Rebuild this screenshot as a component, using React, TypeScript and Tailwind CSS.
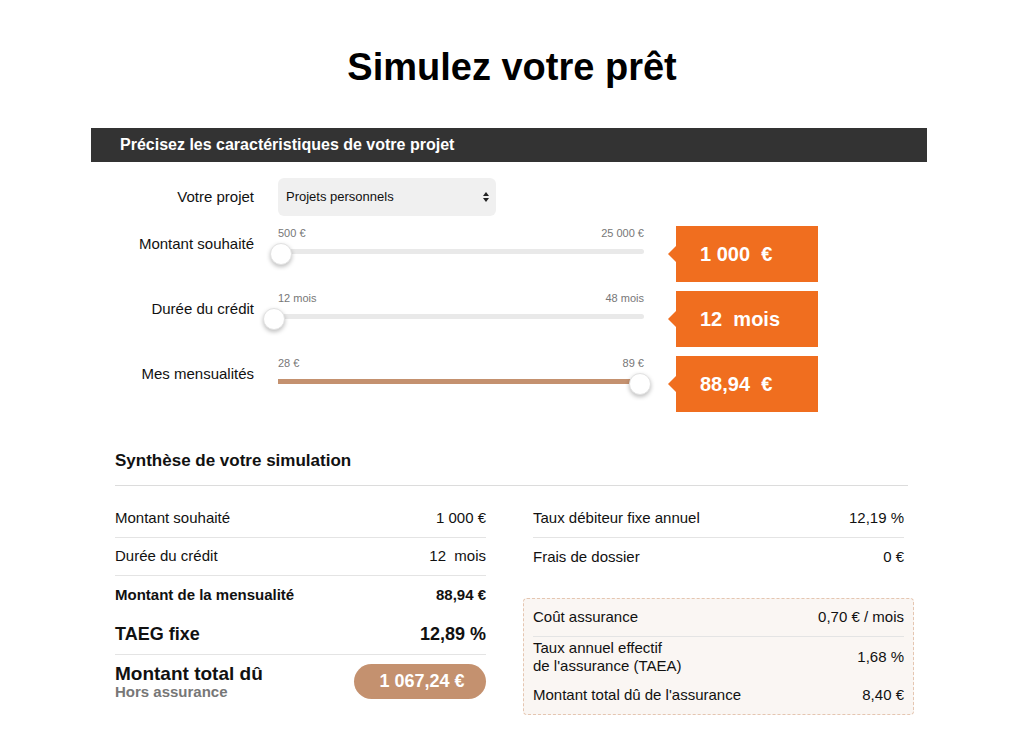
import React from "react";

const sliders = [
  { label: "Montant souhaité", min: "500 €", max: "25 000 €", value: "1 000\u00a0 €", thumb: 3, fill: false },
  { label: "Durée du crédit", min: "12 mois", max: "48 mois", value: "12\u00a0 mois", thumb: -4, fill: false },
  { label: "Mes mensualités", min: "28 €", max: "89 €", value: "88,94\u00a0 €", thumb: 362, fill: true },
];

function Row({ label, value, bold, border = true }: { label: React.ReactNode; value: React.ReactNode; bold?: boolean; border?: boolean }) {
  return (
    <div className={`flex h-[38px] items-center justify-between ${border ? "border-b border-[#e4e4e4]" : ""} ${bold ? "font-bold" : ""}`}>
      <span>{label}</span>
      <span>{value}</span>
    </div>
  );
}

export default function App() {
  return (
    <div className="min-h-[740px] bg-white pt-[45px] font-['Liberation_Sans',Arial,sans-serif] text-[15px] text-[#111]">
      <h1 className="text-center text-[38px] font-bold leading-[44px] text-black">Simulez votre prêt</h1>

      <div className="ml-[91px] mt-[39px] w-[836px]">
        <div className="flex h-[34px] items-center bg-[#333333] pl-[29px] text-[16px] font-bold text-white">
          Précisez les caractéristiques de votre projet
        </div>

        {/* formulaire */}
        <div className="mt-[16px] flex h-[38px] items-center">
          <div className="w-[163px] text-right">Votre projet</div>
          <div className="ml-[24px] flex h-[38px] w-[218px] items-center justify-between rounded-[6px] bg-[#f0f0f0] pl-[8px] pr-[6px] text-[13px]">
            <span>Projets personnels</span>
            <svg width="8" height="12" viewBox="0 0 8 12" className="text-[#222]">
              <path d="M4 1 L7 5 L1 5 Z" fill="currentColor" />
              <path d="M4 11 L7 7 L1 7 Z" fill="currentColor" />
            </svg>
          </div>
        </div>

        <div className="mt-[10px] flex flex-col gap-[9px]">
          {sliders.map((s) => (
            <div key={s.label} className="flex h-[56px] items-start">
              <div className="w-[163px] pt-[8px] text-right leading-[20px]">{s.label}</div>
              <div className="ml-[24px] w-[366px]">
                <div className="flex justify-between text-[11px] leading-[14px] text-[#777]">
                  <span>{s.min}</span>
                  <span>{s.max}</span>
                </div>
                <div className="relative mt-[9px] h-[5px] rounded-full bg-[#e9e9e9]">
                  {s.fill && <div className="h-[5px] w-[356px] bg-[#c4916f]" />}
                  <div
                    className="absolute top-1/2 h-[22px] w-[22px] -translate-x-1/2 -translate-y-[9px] rounded-full border border-[#e2e2e2] bg-white shadow-[0_2px_4px_rgba(0,0,0,0.25)]"
                    style={{ left: s.thumb }}
                  />
                </div>
              </div>
              <div className="relative ml-[32px] flex h-[56px] w-[142px] items-center bg-[#f06e1f] pl-[24px] text-[20px] font-bold text-white">
                <span className="absolute left-[-8px] top-1/2 -translate-y-1/2 border-y-[8px] border-r-[8px] border-y-transparent border-r-[#f06e1f]" />
                {s.value}
              </div>
            </div>
          ))}
        </div>

        {/* synthèse */}
        <div className="mt-[37px] pl-[24px]">
          <div className="w-[793px]">
            <h2 className="border-b border-[#dcdcdc] pb-[12px] text-[17px] font-bold leading-[24px]">Synthèse de votre simulation</h2>
            <div className="mt-[14px] grid grid-cols-[371px_371px] gap-[47px]">
              <div>
                <Row label="Montant souhaité" value="1 000 €" />
                <Row label="Durée du crédit" value={"12\u00a0 mois"} />
                <Row label="Montant de la mensualité" value="88,94 €" bold border={false} />
                <div className="flex h-[41px] items-center justify-between border-b border-[#e4e4e4] text-[18px] font-bold">
                  <span>TAEG fixe</span>
                  <span>12,89 %</span>
                </div>
                <div className="flex items-center justify-between pt-[9px]">
                  <div className="font-bold">
                    <div className="text-[19px] leading-[20px]">Montant total dû</div>
                    <div className="text-[15px] leading-[15px] text-[#777]">Hors assurance</div>
                  </div>
                  <div className="flex h-[35px] w-[132px] items-center justify-center rounded-full bg-[#c4916f] pl-[4px] text-[18px] font-bold text-white">
                    1 067,24 €
                  </div>
                </div>
              </div>
              <div>
                <Row label="Taux débiteur fixe annuel" value="12,19 %" />
                <Row label="Frais de dossier" value="0 €" border={false} />
                <div className="-mx-[10px] mt-[22px] rounded-[4px] border border-dashed border-[#e5c6b1] bg-[#faf6f3] px-[9px]">
                  <Row label="Coût assurance" value="0,70 € / mois" />
                  <div className="flex h-[39px] items-center justify-between leading-[18px]">
                    <span>
                      Taux annuel effectif
                      <br />
                      de l'assurance (TAEA)
                    </span>
                    <span>1,68 %</span>
                  </div>
                  <Row label="Montant total dû de l'assurance" value="8,40 €" border={false} />
                </div>
              </div>
            </div>
          </div>
        </div>
      </div>
    </div>
  );
}
